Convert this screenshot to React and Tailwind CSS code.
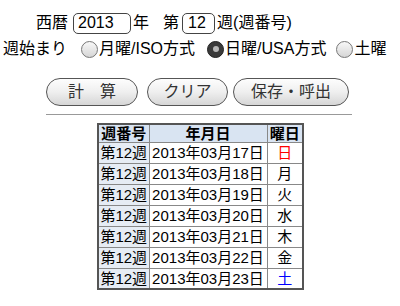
export default function App() {
  const rows = [
    ["17", "日", "text-[#ff0000]"],
    ["18", "月", ""],
    ["19", "火", ""],
    ["20", "水", ""],
    ["21", "木", ""],
    ["22", "金", ""],
    ["23", "土", "text-[#0000ff]"],
  ];
  const Radio = ({ checked }) => (
    <span
      className={
        checked
          ? "w-[17px] h-[17px] rounded-full bg-[#3a3a3a] border border-[#222] flex items-center justify-center"
          : "w-[17px] h-[17px] rounded-full border border-[#777] bg-gradient-to-b from-[#f8f8f8] to-[#d6d6d6] flex items-center justify-center"
      }
    >
      {checked && <span className="w-[6px] h-[6px] rounded-full bg-[#b8b8b8]" />}
    </span>
  );
  const btn =
    "h-[28px] rounded-full border border-[#555] bg-gradient-to-b from-[#fdfdfd] via-[#efefef] to-[#d6d6d6] text-[#333] text-[16px] flex items-center justify-center";
  return (
    <div className="w-[400px] h-[306px] bg-white text-black text-[16px] leading-none font-['Liberation_Sans','Noto_Sans_CJK_JP',sans-serif] overflow-hidden">
      <div className="flex items-center pl-[36px] pt-[12px] h-[34px]">
        <span>西暦</span>
        <span className="ml-[5px] w-[58px] h-[21px] border border-[#444] rounded-[5px] flex items-center pl-[4px]">2013</span>
        <span className="ml-[2px]">年</span>
        <span className="ml-[14px]">第</span>
        <span className="ml-[3px] w-[33px] h-[21px] border border-[#444] rounded-[5px] flex items-center pl-[5px]">12</span>
        <span className="ml-[2px]">週(週番号)</span>
      </div>
      <div className="flex items-center pl-[3px] h-[24px] mt-[3px]">
        <span>週始まり</span>
        <span className="ml-[14px]"><Radio /></span>
        <span className="ml-[1px]">月曜/ISO方式</span>
        <span className="ml-[12px]"><Radio checked /></span>
        <span className="ml-[1px]">日曜/USA方式</span>
        <span className="ml-[10px]"><Radio /></span>
        <span className="ml-[1px]">土曜</span>
      </div>
      <div className="flex pl-[46px] mt-[17px]">
        <button className={btn + " w-[92px]"}>計　算</button>
        <button className={btn + " w-[81px] ml-[9px]"}>クリア</button>
        <button className={btn + " w-[116px] ml-[5px]"}>保存・呼出</button>
      </div>
      <div className="ml-[46px] mt-[8px] w-[306px] h-px bg-[#999]" />
      <table className="ml-[97px] mt-[8px] border-collapse border-2 border-[#555] text-[15px]">
        <thead>
          <tr className="h-[18px] bg-[#d9e4f2] font-bold">
            <th className="border border-[#888] w-[51px] p-0 font-bold">週番号</th>
            <th className="border border-[#888] w-[118px] p-0 font-bold">年月日</th>
            <th className="border border-[#888] w-[36px] p-0 font-bold">曜日</th>
          </tr>
        </thead>
        <tbody>
          {rows.map(([d, w, c]) => (
            <tr key={d} className="h-[21px]">
              <td className="border border-[#888] bg-[#e6ecf4] p-0 text-center">第12週</td>
              <td className="border border-[#888] p-0 text-center">2013年03月{d}日</td>
              <td className={"border border-[#888] p-0 text-center " + c}>{w}</td>
            </tr>
          ))}
        </tbody>
      </table>
    </div>
  );
}
